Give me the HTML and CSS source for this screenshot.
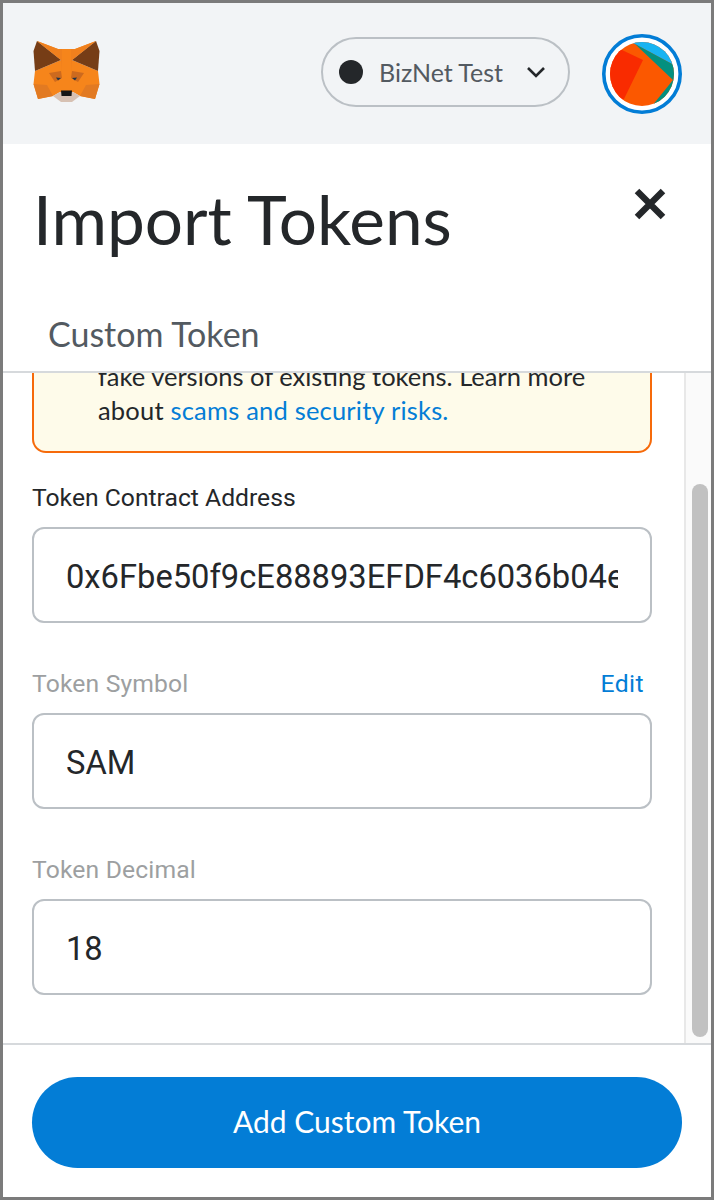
FILE: index.html
```html
<!DOCTYPE html>
<html lang="en">
<head>
<meta charset="utf-8">
<title>Import Tokens</title>
<link rel="stylesheet" href="styles.css">
</head>
<body>
<div class="frame">
  <header class="topbar">
    <svg class="fox" viewBox="33 41 68 64" width="68" height="64" aria-label="MetaMask">
      <polygon fill="#f6851b" points="37,42 58,50 75,50 96,42 72,61 98,72 99.5,85 95,100 80,97 73,93 60,93 53,97 38,100 33.5,85 35,72 61,61"/>
      <polygon fill="#763d16" points="37,42 33.5,52 35,72 61,61"/>
      <polygon fill="#763d16" points="96,42 99.5,52 98,72 72,61"/>
      <polygon fill="#f0801d" points="58,50 37,42 61,61 62,74 62,50"/>
      <polygon fill="#f0801d" points="75,50 96,42 72,61 71,74 71,50"/>
      <polygon fill="#cd6a1e" points="49,74 61,72 62,79 55,83"/>
      <polygon fill="#cd6a1e" points="84,74 72,72 71,79 78,83"/>
      <polygon fill="#e27a22" points="33.5,85 47,86 53,97 38,100"/>
      <polygon fill="#e27a22" points="99.5,85 86,86 80,97 95,100"/>
      <polygon fill="#d7c1b3" points="53,97 60,93 73,93 80,97 72,103 61,103"/>
      <polygon fill="#161616" points="61,91.5 72,91.5 71.5,97 61.5,97"/>
      <polygon fill="#233447" points="56,78.5 61,79 58,81.5"/>
      <polygon fill="#233447" points="77,78.5 72,79 75,81.5"/>
    </svg>
    <div class="topbar-right">
      <button class="network" type="button">
        <span class="dot"></span>
        <span class="network-name">BizNet Test</span>
        <svg class="chevron" viewBox="0 0 20 12" width="20" height="12"><path d="M2 2l8 8 8-8" fill="none" stroke="#24272a" stroke-width="2.6"/></svg>
      </button>
      <svg class="avatar" viewBox="602 32 80 80" width="80" height="80" aria-label="Account">
        <defs><clipPath id="avatar-clip"><circle cx="642" cy="72" r="32"/></clipPath></defs>
        <circle cx="642" cy="72" r="38.2" fill="#fff" stroke="#037dd6" stroke-width="3.6"/>
        <g clip-path="url(#avatar-clip)">
          <rect x="610" y="40" width="64" height="64" fill="#fb5800"/>
          <polygon fill="#18b4f2" points="630,40 680,40 680,68 672,62 635,42"/>
          <polygon fill="#03907f" points="635,42 672,62 680,68 680,80 673,78"/>
          <polygon fill="#03907f" points="673,78 680,80 680,104 652,104"/>
          <polygon fill="#f92b00" points="622,48 643,58 624,97 600,110 600,40"/>
        </g>
      </svg>
    </div>
  </header>
  <section class="page-head">
    <div class="title-row">
      <h1 class="title">Import Tokens</h1>
      <svg class="close" viewBox="0 0 32 32" width="32" height="32" aria-label="Close"><path d="M3 3l26 26M29 3L3 29" stroke="#24272a" stroke-width="6.4" fill="none"/></svg>
    </div>
    <div class="tab">Custom Token</div>
  </section>
  <div class="body-row">
    <main class="form">
      <div class="warning">
        <p class="warning-text">fake versions of existing tokens. Learn more</p>
        <p class="warning-text spaced">about <a class="link" href="#">scams and security risks.</a></p>
      </div>
      <div class="field first">
        <div class="label-row"><label class="label">Token Contract Address</label></div>
        <input class="input" value="0x6Fbe50f9cE88893EFDF4c6036b04e7c1a8f3d2b5">
      </div>
      <div class="field">
        <div class="label-row"><label class="label muted">Token Symbol</label><a class="edit" href="#">Edit</a></div>
        <input class="input" value="SAM">
      </div>
      <div class="field">
        <div class="label-row"><label class="label muted">Token Decimal</label></div>
        <input class="input" value="18">
      </div>
    </main>
    <div class="track"><div class="thumb"></div></div>
  </div>
  <footer class="footer">
    <button class="primary" type="button">Add Custom Token</button>
  </footer>
</div>
</body>
</html>
```
FILE: styles.css
```css
* { box-sizing: border-box; }
html, body { margin: 0; padding: 0; background: #fff; }
body { font-family: "Lato", "Liberation Sans", sans-serif; color: #24272a; }
.frame {
  width: 714px; height: 1200px;
  border: 3px solid #7b7b7b;
  display: flex; flex-direction: column;
  overflow: hidden;
}
.topbar {
  height: 141px; flex: none;
  background: #f2f4f6;
  padding: 0 29px 0 30px;
  display: flex; align-items: center; justify-content: space-between;
}
.fox { display: block; margin-top: -4px; }
.topbar-right { display: flex; align-items: center; gap: 32px; }
.network {
  width: 249px; height: 70px; margin-top: -3px;
  border: 2px solid #bbc0c5; border-radius: 35px;
  background: transparent; padding: 0 0 0 16px;
  display: flex; align-items: center;
  font: inherit;
}
.dot { width: 24px; height: 24px; border-radius: 50%; background: #24272a; flex: none; }
.network-name { margin-left: 16px; font-size: 25px; color: #535a61; white-space: nowrap; }
.chevron { margin-left: 23px; flex: none; }
.avatar { display: block; }
.page-head {
  flex: none; height: 229px;
  border-bottom: 2px solid #d6d9dc;
  display: flex; flex-direction: column;
}
.title-row {
  display: flex; justify-content: space-between; align-items: flex-start;
  padding: 0 45px 0 30px;
  height: 168px;
}
.title { margin: 31px 0 0; font-size: 67.5px; line-height: 88px; font-weight: 400; color: #24272a; }
.close { margin-top: 44px; }
.tab { padding-left: 45px; font-size: 34px; line-height: 44px; color: #535a61; }
.body-row { flex: 1; min-height: 0; display: flex; overflow: hidden; }
.form { flex: 1; min-width: 0; padding: 0 32px 0 29px; }
.warning {
  margin-top: -13px;
  height: 93px;
  background: #fefbea;
  border: 2px solid #f66a0a; border-top: 0;
  border-radius: 0 0 14px 14px;
  padding-left: 64px;
}
.warning-text { margin: 0; font-size: 25.5px; line-height: 33.5px; white-space: nowrap; }
.warning-text.spaced { letter-spacing: .2px; }
.link { color: #037dd6; text-decoration: none; }
.field { margin-top: 41px; }
.field.first { margin-top: 25px; }
.label-row { display: flex; justify-content: space-between; height: 49px; padding-right: 8px; }
.label { font-family: "Roboto", "Liberation Sans", sans-serif; font-size: 24.7px; line-height: 39px; color: #24272a; }
.label.muted { color: #9d9fa1; letter-spacing: .15px; }
.edit { font-family: "Roboto", "Liberation Sans", sans-serif; font-size: 24.7px; line-height: 39px; letter-spacing: .4px; color: #037dd6; text-decoration: none; }
.input {
  display: block; width: 100%; height: 96px;
  border: 2px solid #bbc0c5; border-radius: 12px;
  padding: 3px 32px 0;
  font-family: "Roboto", "Liberation Sans", sans-serif; font-size: 32.7px; color: #24272a;
  background: #fff; outline: none;
}
.track {
  width: 27px; flex: none;
  background: #fafafa; border-left: 2px solid #e8e8e8;
  padding: 111px 3px 0 6px;
}
.thumb { height: 553px; background: #c1c1c1; border-radius: 8px; }
.footer {
  flex: none; height: 154px;
  border-top: 2px solid #d6d9dc;
  padding: 32px 29px 0;
}
.primary {
  display: block; width: 100%; height: 91px;
  border: 0; border-radius: 46px;
  background: #037dd6; color: #fff; padding: 0 0 3px;
  font-family: "Lato", "Liberation Sans", sans-serif; font-size: 30px;
}
```
